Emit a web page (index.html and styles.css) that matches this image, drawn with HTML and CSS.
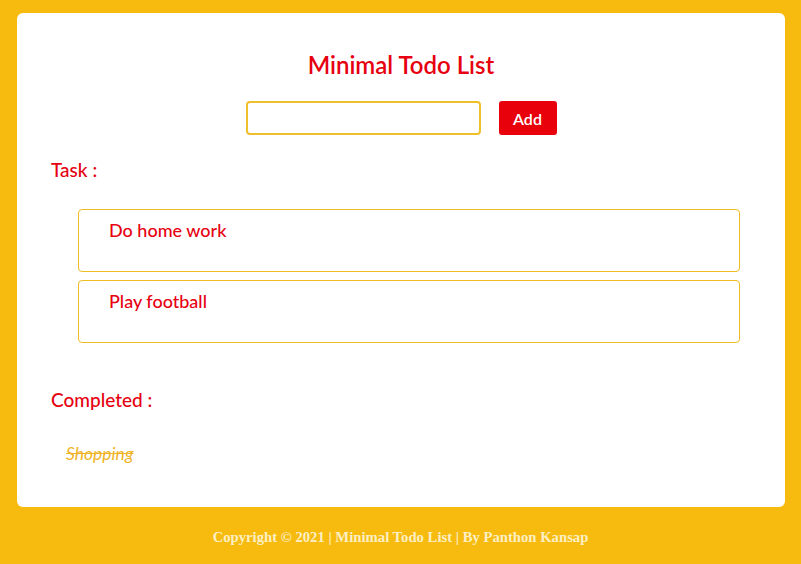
FILE: index.html
```html
<!DOCTYPE html>
<html lang="en">
<head>
<meta charset="utf-8">
<title>Minimal Todo List</title>
<link rel="stylesheet" href="styles.css">
</head>
<body>
<main class="card">
  <h1 class="title">Minimal Todo List</h1>
  <form class="add-form">
    <input class="add-input" type="text">
    <button class="add-btn" type="button">Add</button>
  </form>
  <h2 class="section-label">Task :</h2>
  <ul class="task-list">
    <li class="task">Do home work</li>
    <li class="task">Play football</li>
  </ul>
  <h2 class="section-label completed-label">Completed :</h2>
  <ul class="done-list">
    <li class="done">Shopping</li>
  </ul>
</main>
<footer class="footer">Copyright © 2021 | Minimal Todo List | By Panthon Kansap</footer>
</body>
</html>
```
FILE: styles.css
```css
* { box-sizing: border-box; }
html, body { margin: 0; padding: 0; }
body {
  background: #f7bb10;
  font-family: Lato, "Noto Sans", sans-serif;
  height: 564px;
  overflow: hidden;
}
.card {
  margin: 13px 16px 0 17px;
  height: 494px;
  background: #fff;
  border-radius: 6px;
  padding: 37px 45px 0 34px;
}
.title {
  margin: 0;
  text-align: center;
  color: #e60010;
  font-size: 24px;
  line-height: 30px;
  font-weight: 600;
  padding-left: 11px;
}
.add-form {
  margin: 21px 0 0;
  display: flex;
  justify-content: center;
  gap: 18px;
  padding-left: 11px;
}
.add-input {
  width: 235px;
  height: 34px;
  border: 2px solid #f0bf2c;
  border-radius: 4px;
  outline: none;
  margin: 0;
}
.add-btn {
  width: 58px;
  height: 34px;
  border: none;
  border-radius: 3px;
  background: #e8000b;
  color: #fff;
  font-family: Lato, "Noto Sans", sans-serif;
  font-size: 16px;
  font-weight: 600;
  margin: 0;
  padding: 0;
}
.section-label {
  margin: 23px 0 0;
  color: #e60010;
  font-size: 19px;
  line-height: 24px;
  font-weight: 500;
}
.task-list {
  list-style: none;
  margin: 27px 0 0 27px;
  padding: 0;
  display: flex;
  flex-direction: column;
  gap: 8px;
}
.task {
  height: 63px;
  border: 1.5px solid #eebb22;
  border-radius: 4px;
  padding: 8px 0 0 30px;
  color: #e60010;
  font-size: 18px;
  line-height: 24px;
  font-weight: 500;
}
.completed-label { margin-top: 45px; }
.done-list {
  list-style: none;
  margin: 31px 0 0 15px;
  padding: 0;
}
.done {
  color: #f0b429;
  font-style: italic;
  text-decoration: line-through;
  font-size: 17.5px;
  line-height: 22px;
}
.footer {
  height: 57px;
  display: flex;
  align-items: center;
  justify-content: center;
  padding-top: 3px;
  color: #fcefc4;
  font-family: "Liberation Serif", Georgia, serif;
  font-size: 14.7px;
  font-weight: bold;
}
```
